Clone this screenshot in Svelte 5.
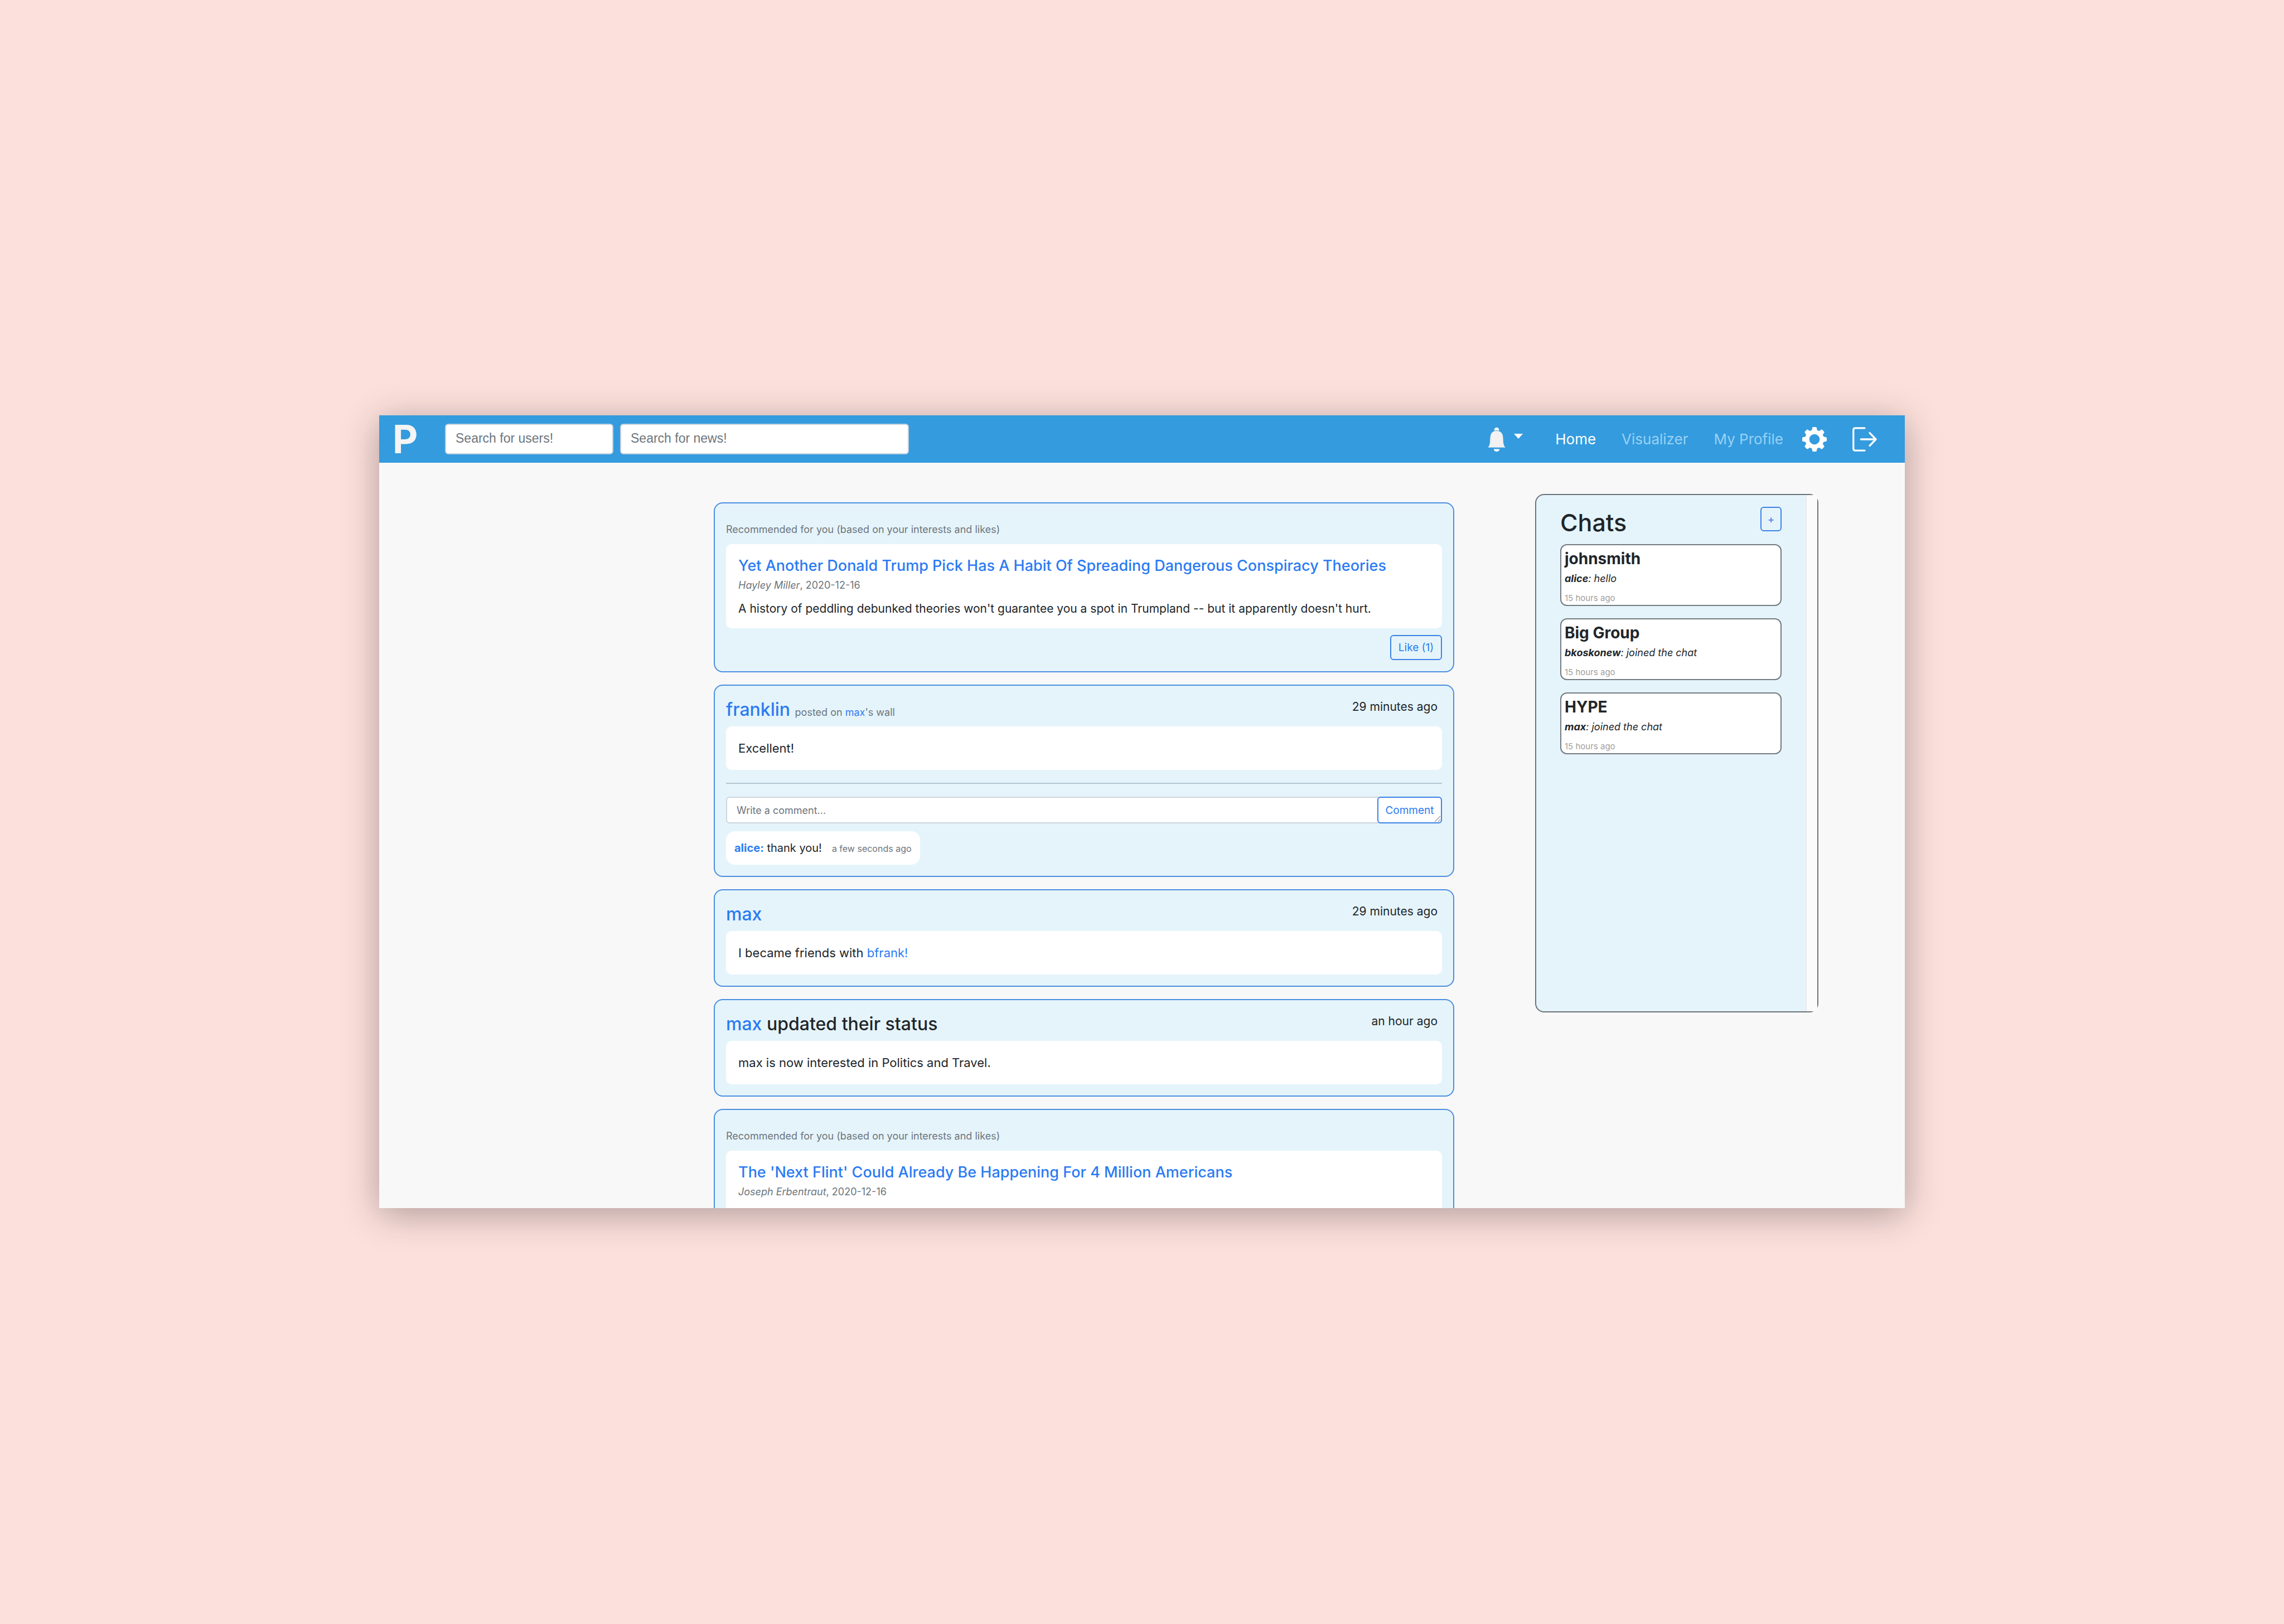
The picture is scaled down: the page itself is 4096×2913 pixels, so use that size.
<script lang="ts">
  const posts = [
    {
      kind: 'news',
      title: 'Yet Another Donald Trump Pick Has A Habit Of Spreading Dangerous Conspiracy Theories',
      author: 'Hayley Miller',
      date: '2020-12-16',
      summary:
        "A history of peddling debunked theories won't guarantee you a spot in Trumpland -- but it apparently doesn't hurt.",
      likes: 1,
    },
    {
      kind: 'post',
      author: 'franklin',
      wall: 'max',
      time: '29 minutes ago',
      text: 'Excellent!',
      comments: [{ author: 'alice', text: 'thank you!', time: 'a few seconds ago' }],
    },
    { kind: 'post', author: 'max', time: '29 minutes ago', text: 'I became friends with ', mention: 'bfrank!' },
    {
      kind: 'post',
      author: 'max',
      action: 'updated their status',
      time: 'an hour ago',
      text: 'max is now interested in Politics and Travel.',
    },
    {
      kind: 'news',
      title: "The 'Next Flint' Could Already Be Happening For 4 Million Americans",
      author: 'Joseph Erbentraut',
      date: '2020-12-16',
    },
  ];

  const chats = [
    { name: 'johnsmith', sender: 'alice', message: 'hello', time: '15 hours ago' },
    { name: 'Big Group', sender: 'bkoskonew', message: 'joined the chat', time: '15 hours ago' },
    { name: 'HYPE', sender: 'max', message: 'joined the chat', time: '15 hours ago' },
  ];

  const teeth = [0, 45, 90, 135, 180, 225, 270, 315];
</script>

<div class="stage">
  <div class="window">
    <nav class="navbar">
      <a class="brand" href="#home">P</a>
      <input class="search users" type="text" placeholder="Search for users!" aria-label="Search for users" />
      <input class="search news" type="text" placeholder="Search for news!" aria-label="Search for news" />

      <div class="links">
        <button class="icon bell" type="button" aria-label="Notifications">
          <svg class="bell-glyph" viewBox="0 0 36 46" aria-hidden="true">
            <circle cx="18" cy="5" r="4.6" fill="#fff" />
            <path
              d="M0.5 39C5 34.500 5 29 5.300 20C5.800 11 10.500 6.500 18 6.500S30.200 11 30.700 20C31 29 31 34.500 35.500 39Z"
              fill="#f2f2f2"
              stroke="#349bde"
              stroke-width="1"
            />
            <path d="M12.500 41.500H23.500A5.500 4.800 0 0 1 12.500 41.500Z" fill="#fff" />
          </svg>
          <svg class="caret" viewBox="0 0 16 9" aria-hidden="true"><path d="M0 0H16L8 9Z" fill="#fff" /></svg>
        </button>
        <a class="link active" href="#home">Home</a>
        <a class="link" href="#visualizer">Visualizer</a>
        <a class="link profile" href="#profile">My Profile</a>
        <button class="icon gear" type="button" aria-label="Settings">
          <svg class="glyph" viewBox="-23 -23 46 46" aria-hidden="true">
            <circle r="13.700" fill="none" stroke="#fff" stroke-width="8" />
            {#each teeth as angle}
              <path
                d="M-5.500 -15L-4 -21.600Q-3.700 -23 -2.500 -23H2.500Q3.700 -23 4 -21.600L5.500 -15Z"
                fill="#fff"
                transform="rotate({angle})"
              />
            {/each}
          </svg>
        </button>
        <button class="icon" type="button" aria-label="Log out">
          <svg class="glyph" viewBox="0 0 46 46" aria-hidden="true">
            <path
              d="M23 1.900H5.500Q1.900 1.900 1.900 5.500V40.500Q1.900 44.100 5.500 44.100H23M16 23H43.500M32.500 11L44 23L32.500 35"
              fill="none"
              stroke="#fff"
              stroke-width="3.400"
              stroke-linecap="round"
              stroke-linejoin="round"
            />
          </svg>
        </button>
      </div>
    </nav>

    <div class="content">
      <main class="feed">
        {#each posts as post}
          <article class="card">
            {#if post.kind === 'news'}
              <p class="reason">Recommended for you (based on your interests and likes)</p>
              <div class="box story">
                <h2 class="title"><a href="#story">{post.title}</a></h2>
                <p class="byline"><em>{post.author}</em>, {post.date}</p>
                {#if post.summary}<p class="summary">{post.summary}</p>{/if}
              </div>
              {#if post.likes}
                <div class="actions"><button class="outline like" type="button">Like ({post.likes})</button></div>
              {/if}
            {:else}
              <header class="head">
                <h2 class="name">
                  <a href="#user">{post.author}</a>
                  {#if post.action}{post.action}{/if}
                  {#if post.wall}<small>posted on <a href="#wall">{post.wall}</a>'s wall</small>{/if}
                </h2>
                <time class="time">{post.time}</time>
              </header>
              <p class="box text">{post.text}{#if post.mention}<a href="#friend">{post.mention}</a>{/if}</p>
              {#if post.comments}
                <hr class="rule" />
                <form class="write">
                  <textarea rows="1" placeholder="Write a comment..." aria-label="Write a comment"></textarea>
                  <button class="outline send" type="button">Comment</button>
                  <svg class="grip" viewBox="0 0 12 12" aria-hidden="true">
                    <path d="M1 11L11 1M7 11L11 7" stroke="#555" stroke-width="1" />
                  </svg>
                </form>
                {#each post.comments as comment}
                  <p class="comment">
                    <a href="#user">{comment.author}:</a>
                    {comment.text}<span class="when">{comment.time}</span>
                  </p>
                {/each}
              {/if}
            {/if}
          </article>
        {/each}
      </main>

      <aside class="chats">
        <div class="list">
          <header class="chats-head">
            <h1>Chats</h1>
            <button class="outline add" type="button" aria-label="New chat">+</button>
          </header>
          {#each chats as chat}
            <a class="chat" href="#chat">
              <strong class="chat-name">{chat.name}</strong>
              <em class="chat-message"><b>{chat.sender}</b>: {chat.message}</em>
              <span class="chat-time">{chat.time}</span>
            </a>
          {/each}
        </div>
        <div class="track"></div>
      </aside>
    </div>
  </div>
</div>

<style>
  :global(body) {
    background: #fce0dc;
  }

  .stage {
    box-sizing: border-box;
    height: 100vh;
    padding: 745px 680px 746px;
    overflow: hidden;
    font-family: Inter, 'Liberation Sans', sans-serif;
    font-size: 22px;
    line-height: 34px;
    color: #212529;
  }

  .stage :global(*) {
    box-sizing: border-box;
  }

  .window {
    display: flex;
    flex-direction: column;
    height: 100%;
    overflow: hidden;
    background: #f8f8f8;
    box-shadow: 0 11px 62px rgba(0, 0, 0, 0.31);
  }

  h1,
  h2,
  p {
    margin: 0;
    font-weight: 400;
  }

  a {
    color: #2b7bf2;
    text-decoration: none;
  }

  button,
  input,
  textarea {
    margin: 0;
    font-family: inherit;
  }

  /* Navigation bar */
  .navbar {
    display: flex;
    flex: none;
    align-items: center;
    height: 85px;
    padding: 0 50px 0 24px;
    background: #349bde;
  }

  .brand {
    width: 94px;
    font-size: 70px;
    font-weight: 700;
    line-height: 80px;
    color: #f4f4f4;
  }

  .search {
    height: 55px;
    margin-right: 12px;
    padding: 0 17px 2px;
    font-family: 'Liberation Sans', Arial, sans-serif;
    font-size: 23px;
    background: #fff;
    border: 2px solid #c3d0de;
    border-radius: 6px;
  }

  .search::placeholder,
  textarea::placeholder {
    color: #6c757d;
    opacity: 1;
  }

  .users {
    width: 302px;
  }

  .news {
    width: 518px;
  }

  .links {
    display: flex;
    align-items: center;
    margin-left: auto;
  }

  .icon {
    display: flex;
    padding: 0;
    background: none;
    border: 0;
  }

  .glyph {
    display: block;
    width: 44px;
    height: 44px;
  }

  .bell {
    gap: 14px;
    margin-right: 58px;
  }

  .bell-glyph {
    width: 34px;
    height: 44px;
  }

  .caret {
    width: 16px;
    height: 9px;
    margin-top: 12px;
  }

  .link {
    margin-right: 46px;
    font-size: 26px;
    color: #98d1f5;
  }

  .active {
    color: #fff;
  }

  .profile {
    margin-right: 34px;
  }

  .gear {
    margin-right: 46px;
  }

  /* Page columns */
  .content {
    display: grid;
    grid-template-columns: 600fr 1328fr 145fr 508fr 155fr;
    align-items: start;
  }

  .feed {
    display: grid;
    grid-column: 2;
    gap: 22px;
    padding-top: 71px;
  }

  .card {
    padding: 20px;
    background: #e5f4fb;
    border: 2px solid #4a8fe0;
    border-radius: 16px;
  }

  .box {
    padding: 22px;
    background: #fff;
    border-radius: 10px;
  }

  .reason {
    margin: 14px 0 13px;
    font-size: 18px;
    line-height: 26px;
    color: #6c757d;
  }

  .story {
    min-height: 151px;
    padding-bottom: 18px;
  }

  .title {
    font-size: 27px;
    font-weight: 500;
  }

  .byline {
    font-size: 18px;
    line-height: 36px;
    color: #6c757d;
  }

  .summary {
    margin-top: 7px;
    font-size: 21px;
  }

  .actions {
    display: flex;
    justify-content: flex-end;
    margin-top: 12px;
  }

  .outline {
    padding: 0;
    font-size: 19px;
    color: #2b7bf2;
    background: none;
    border: 2px solid #3d82e6;
    border-radius: 6px;
  }

  .like {
    width: 93px;
    height: 45px;
  }

  .head {
    display: flex;
    justify-content: space-between;
    height: 53px;
  }

  .name {
    font-size: 32px;
    font-weight: 500;
    line-height: 46px;
  }

  .name small {
    font-size: 18px;
    font-weight: 400;
    color: #6c757d;
  }

  .time {
    padding-right: 8px;
    font-size: 21px;
    line-height: 36px;
  }

  .rule {
    height: 2px;
    margin: 23px 0;
    background: #b2c6d0;
    border: 0;
  }

  .write {
    position: relative;
    display: flex;
  }

  textarea {
    flex: 1;
    height: 48px;
    padding: 11px 17px;
    overflow: hidden;
    font-size: 18px;
    line-height: 23px;
    background: #fff;
    border: 2px solid #cdd5dc;
    border-radius: 6px;
    resize: none;
  }

  .send {
    position: absolute;
    top: 0;
    right: 0;
    width: 116px;
    height: 100%;
  }

  .grip {
    position: absolute;
    right: 2px;
    bottom: 2px;
    width: 12px;
    height: 12px;
  }

  .comment {
    width: fit-content;
    margin-top: 14px;
    padding: 13px 15px 12px;
    font-size: 20px;
    background: #fff;
    border-radius: 16px;
  }

  .comment a {
    font-weight: 700;
  }

  .when {
    margin-left: 18px;
    font-size: 16px;
    color: #6c757d;
  }

  /* Chats panel */
  .chats {
    display: flex;
    grid-column: 4;
    height: 930px;
    margin-top: 56px;
    background: #e5f4fb;
    border: 2px solid #6b7378;
    border-radius: 16px;
  }

  .list {
    flex: 1;
    padding: 21px 43px;
  }

  .track {
    width: 21px;
    background: #fbfbfb;
    border-left: 2px solid #ececec;
  }

  .chats-head {
    display: flex;
    align-items: flex-start;
    justify-content: space-between;
    height: 67px;
  }

  h1 {
    font-size: 43px;
    font-weight: 500;
    line-height: 56px;
  }

  .add {
    width: 38px;
    height: 44px;
    font-size: 19px;
  }

  .chat {
    display: flex;
    flex-direction: column;
    height: 111px;
    margin-bottom: 22px;
    padding: 4px 6px;
    color: #212529;
    background: #fff;
    border: 2px solid #737b80;
    border-radius: 12px;
  }

  .chat-name {
    font-size: 28px;
    line-height: 40px;
  }

  .chat-message {
    font-size: 18px;
    line-height: 32px;
  }

  .chat-time {
    margin-top: 7px;
    font-size: 15px;
    line-height: 24px;
    color: #a0a0a0;
  }
</style>
